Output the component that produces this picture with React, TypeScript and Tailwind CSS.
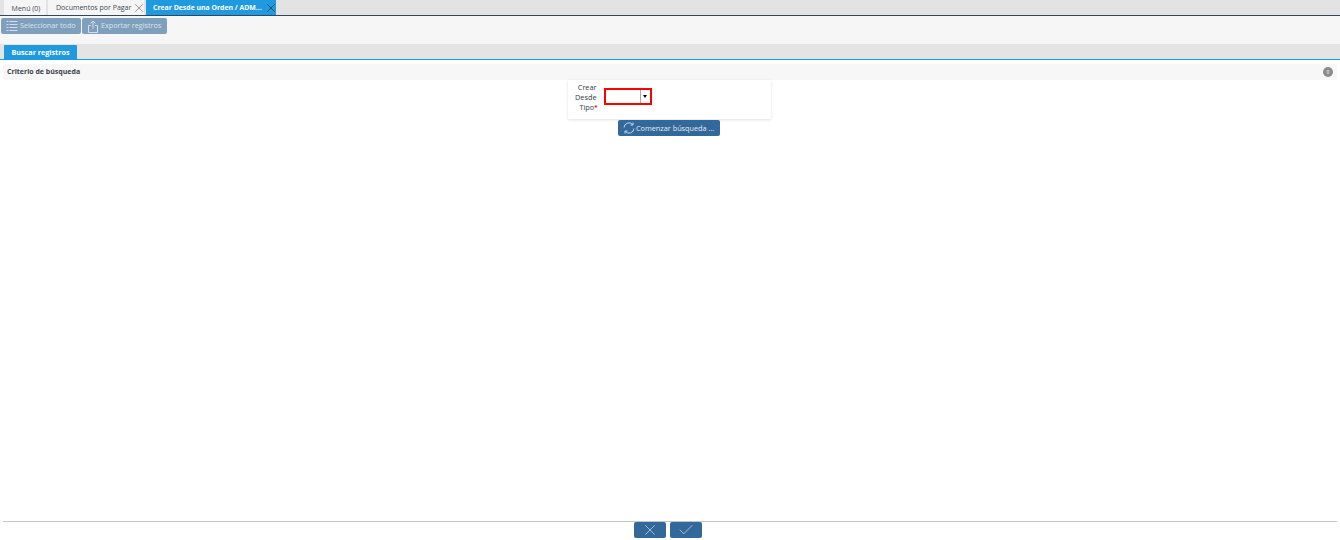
import { Check, X } from 'lucide-react';

const font = { fontFamily: '"Open Sans", sans-serif' };

function ListIcon() {
  return (
    <svg width="12" height="12" viewBox="0 0 12 12" fill="none" stroke="#d5dfe8" strokeWidth="1" className="shrink-0">
      <path d="M.5 1.5h2M.5 4.5h2M.5 7.5h2M.5 10.5h2M3.5 1.5h8M3.5 4.5h8M3.5 7.5h8M3.5 10.5h8" />
    </svg>
  );
}

function ExportIcon() {
  return (
    <svg width="10" height="13" viewBox="0 0 10 13" fill="none" stroke="#d5dfe8" strokeWidth="1" className="shrink-0">
      <path d="M3 5.5H.5v7h9v-7H7M5 9V1M2.5 3.5 5 1l2.5 2.5" />
    </svg>
  );
}

function RefreshIcon() {
  return (
    <svg width="12" height="12" viewBox="0 0 12 12" fill="none" stroke="#c9d8e6" strokeWidth="1" className="shrink-0">
      <path d="M1 5.5A5 5 0 0 1 9.7 2.5M11 6.5A5 5 0 0 1 2.3 9.5M10 .5v2.5H7.5M2 11.5V9h2.5" />
    </svg>
  );
}

export default function App() {
  return (
    <div style={font} className="w-[1340px] h-[540px] bg-white flex flex-col overflow-hidden whitespace-nowrap">
      {/* window tabs */}
      <div className="h-4 shrink-0 bg-[#e3e3e3] border-b border-[#33475b] flex items-end pl-[4px] gap-[2px] text-[7px]">
        <div className="w-[42px] h-[15px] bg-[#f5f5f5] text-[#3f4a58] text-center pl-[2px] pt-[1px] leading-[15px]">Menú (0)</div>
        <div className="w-[96px] h-[15px] bg-[#f5f5f5] text-[#3f4a58] flex items-center pl-[8px] justify-between">
          <span className="pt-[2px]">Documentos por Pagar</span>
          <X size={14} strokeWidth={1} className="text-[#555] mr-[-2px] shrink-0" />
        </div>
        <div className="w-[130px] h-[15px] bg-[#1f9ade] text-white font-bold flex items-center pl-[7px] justify-between text-[6.9px]">
          <span className="pt-[2px]">Crear Desde una Orden / ADM...</span>
          <X size={14} strokeWidth={1} className="text-[#123] mr-[-2px] shrink-0" />
        </div>
      </div>

      {/* toolbar */}
      <div className="h-7 shrink-0 bg-[#f6f6f6] flex items-start pt-[2px] pl-[1px] gap-[1px] text-[7.2px] text-[#dbe4ec]">
        <button className="w-[80px] h-[16px] rounded-[2px] bg-[#7fa0bc] flex items-center gap-[2px] pl-[5px]">
          <ListIcon />
          <span className="pb-[1px]">Seleccionar todo</span>
        </button>
        <button className="w-[85px] h-[16px] rounded-[2px] bg-[#7fa0bc] flex items-center gap-[3px] pl-[6px]">
          <ExportIcon />
          <span className="pb-[1px]">Exportar registros</span>
        </button>
      </div>

      {/* tab strip */}
      <div className="h-[16px] shrink-0 bg-[#e4e4e4] border-b border-[#1f9ade] pl-1 flex items-end">
        <div className="w-[73px] h-[14px] bg-[#1f9ade] rounded-t-[1px] text-white text-[7.2px] font-bold text-center leading-[14px]">
          Buscar registros
        </div>
      </div>

      {/* group header */}
      <div className="mt-1 mx-[3px] h-4 shrink-0 bg-[#f7f7f7] flex items-center justify-between pl-1 pr-[4px]">
        <span className="text-[7px] font-bold text-[#3a3f4a]">Criterio de búsqueda</span>
        <span className="w-[10px] h-[10px] rounded-full bg-[#8c8c8c] text-white text-[5px] leading-[10px] text-center">0</span>
      </div>

      {/* search form */}
      <div className="flex-1 flex flex-col items-center">
        <div className="w-[203px] h-[39px] ml-[-2px] bg-white shadow-[0_1px_3px_rgba(0,0,0,0.12)] flex items-start pt-[2px]">
          <div className="w-[29px] shrink-0 text-right text-[7.3px] leading-[10px] text-[#333a45]">
            <div>Crear</div>
            <div>Desde</div>
            <div className="mr-[-1px]">
              Tipo<span className="text-[#e00] font-bold align-top text-[6px]">*</span>
            </div>
          </div>
          <div className="ml-[7px] mt-[6px] w-[48px] h-[17px] border-2 border-[#f00] bg-white flex justify-end">
            <div className="w-[10px] h-full border-l border-[#aaa] flex items-center justify-center">
              <span className="w-0 h-0 border-x-[2.5px] border-x-transparent border-t-[3px] border-t-black" />
            </div>
          </div>
        </div>
        <button className="mt-[1px] ml-[-2px] w-[102px] h-4 rounded-[2px] bg-[#33689a] text-[#e4ecf3] text-[7.3px] flex items-center gap-[1px] pl-[5px]">
          <RefreshIcon />
          <span>Comenzar búsqueda ...</span>
        </button>
      </div>

      {/* footer */}
      <div className="mx-[3px] h-[18px] shrink-0 border-t border-[#c4c4c4] flex justify-center gap-1 mb-[1px] pr-1">
        <button className="w-8 h-4 rounded-[2px] bg-[#33689a] flex items-center justify-center">
          <X size={18} strokeWidth={1} className="text-[#c9d8e6]" />
        </button>
        <button className="w-8 h-4 rounded-[2px] bg-[#33689a] flex items-center justify-center">
          <Check size={18} strokeWidth={1} className="text-[#c9d8e6]" />
        </button>
      </div>
    </div>
  );
}
